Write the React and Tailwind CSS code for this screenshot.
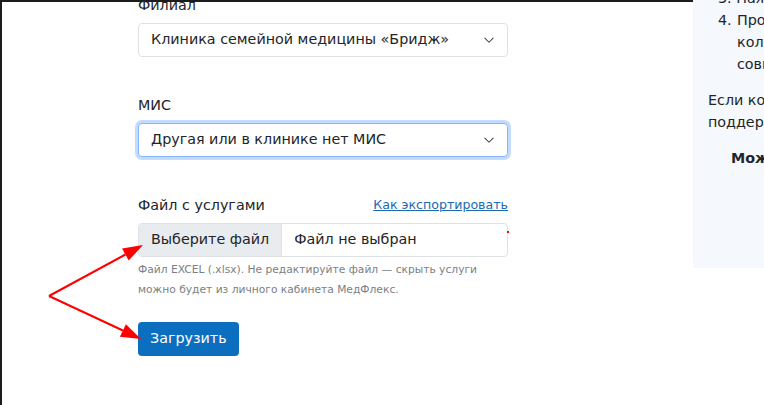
import React from "react";

const font = "font-['DejaVu_Sans',sans-serif]";

function Chevron() {
  return (
    <svg width="12" height="12" viewBox="0 0 16 16" fill="none" className="shrink-0">
      <path d="M2.5 5.5l5.5 5.5 5.5-5.5" stroke="#3d4248" strokeWidth="1.4" strokeLinecap="round" strokeLinejoin="round" />
    </svg>
  );
}

function SelectBox({ value, focused }) {
  return (
    <div
      className={
        focused
          ? "flex h-[34px] items-center justify-between rounded-[4px] border border-[#86b7fe] bg-white pl-3 pr-3 shadow-[0_0_0_3px_rgba(13,110,253,0.25)]"
          : "flex h-[34px] items-center justify-between rounded-[4px] border border-[#dee2e6] bg-white pl-3 pr-3"
      }
    >
      <span className="truncate">{value}</span>
      <Chevron />
    </div>
  );
}

function Arrows() {
  return (
    <svg className="pointer-events-none absolute left-0 top-0" width="764" height="405" viewBox="0 0 764 405">
      <line x1="47" y1="296" x2="123.4" y2="254.5" stroke="#ff0000" strokeWidth="2" />
      <polygon points="141,245 126.7,260.6 120.1,248.4" fill="#ff0000" />
      <line x1="47" y1="296" x2="120.9" y2="330.5" stroke="#ff0000" strokeWidth="2" />
      <polygon points="139,339 117.9,336.8 123.9,324.2" fill="#ff0000" />
      <rect x="505" y="231" width="2" height="2" fill="#ff0000" />
    </svg>
  );
}

export default function App() {
  return (
    <div className={`relative flex h-[405px] w-[764px] overflow-hidden border-l-2 border-[#1c1c1c] bg-white text-[14.3px] text-[#212529] ${font}`}>
      <div className="w-[691px] shrink-0 border-t-2 border-[#1c1c1c] pl-[136px]">
        <div className="-mt-[8px] w-[370px]">
          <div className="mb-[7px] leading-[22px]">Филиал</div>
          <SelectBox value="Клиника семейной медицины «Бридж»" />

          <div className="mb-[7px] mt-[37px] leading-[22px]">МИС</div>
          <SelectBox value="Другая или в клинике нет МИС" focused />

          <div className="mb-[7px] mt-[37px] flex items-end justify-between leading-[22px]">
            <span>Файл с услугами</span>
            <a href="#" className="text-[12.6px] text-[#1b6ab3] underline">
              Как экспортировать
            </a>
          </div>
          <div className="flex h-[34px] overflow-hidden rounded-[4px] border border-[#dee2e6]">
            <div className="flex items-center border-r border-[#dee2e6] bg-[#e9ecef] px-3">Выберите файл</div>
            <div className="flex items-center px-3">Файл не выбран</div>
          </div>
          <div className="mt-[3px] text-[10.7px] leading-[20px] text-[#7a7f85]">
            Файл EXCEL (.xlsx). Не редактируйте файл — скрыть услуги
            <br />
            можно будет из личного кабинета МедФлекс.
          </div>
          <button className="mt-[22px] h-[34px] rounded-[4px] bg-[#0b6ebf] px-3 text-white">Загрузить</button>
        </div>
      </div>

      <div className="h-[268px] w-[320px] shrink-0 overflow-hidden bg-[#f5f8fc] pl-[15px]">
        <div className="-mt-[13px] whitespace-nowrap leading-[22px]">
          <div className="pl-[10px]">3. Нажмите «Экспорт»</div>
          <div className="flex pl-[10px]">
            <span className="w-[19px]">4.</span>
            <div>
              <div>Проверьте, что</div>
              <div>количество услуг</div>
              <div>совпадает</div>
            </div>
          </div>
          <div className="mt-[14px]">Если конфигурация не</div>
          <div>поддерживается, напишите</div>
          <div className="mt-[14px] pl-[23px] font-bold">Можно продолжить</div>
        </div>
      </div>

      <Arrows />
    </div>
  );
}
